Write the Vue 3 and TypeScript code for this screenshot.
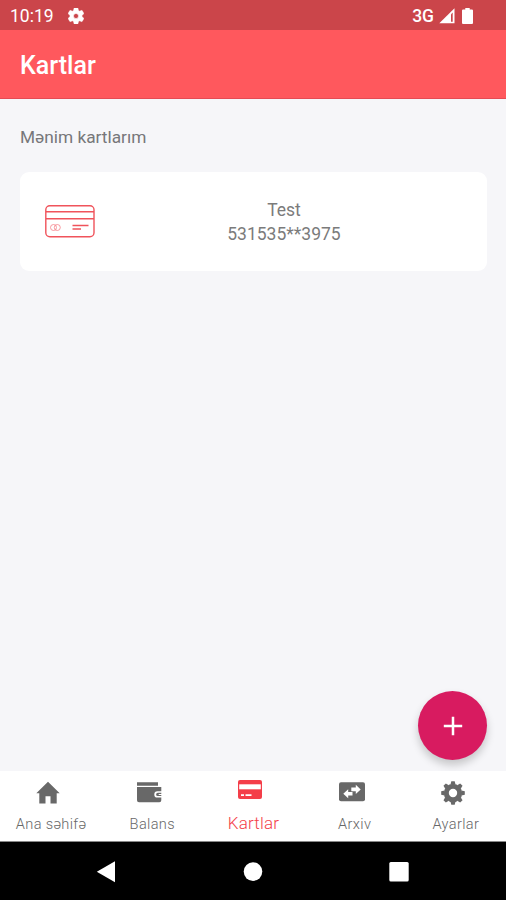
<script setup lang="ts">
import { ref } from 'vue'

interface Tab {
  id: string
  label: string
}

interface BankCard {
  name: string
  number: string
}

const tabs: Tab[] = [
  { id: 'home', label: 'Ana səhifə' },
  { id: 'balance', label: 'Balans' },
  { id: 'cards', label: 'Kartlar' },
  { id: 'archive', label: 'Arxiv' },
  { id: 'settings', label: 'Ayarlar' },
]
const active = ref('cards')
const cards: BankCard[] = [{ name: 'Test', number: '531535**3975' }]
const cogTeeth: number[] = [0, 45, 90, 135, 180, 225, 270, 315]
</script>

<template>
  <div class="screen">
    <div class="status">
      <span class="time">10:19</span>
      <svg class="status-gear" width="16" height="16" viewBox="2 2 20 20">
        <path fill="#fff" stroke="#fff" stroke-width=".8" fill-rule="evenodd" d="M19.43 12.98c.04-.32.07-.64.07-.98s-.03-.66-.07-.98l2.11-1.65c.19-.15.24-.42.12-.64l-2-3.46c-.12-.22-.39-.3-.61-.22l-2.49 1c-.52-.4-1.08-.73-1.69-.98l-.38-2.65C14.46 2.18 14.25 2 14 2h-4c-.25 0-.46.18-.49.42l-.38 2.65c-.61.25-1.17.59-1.69.98l-2.49-1c-.23-.09-.49 0-.61.22l-2 3.46c-.13.22-.07.49.12.64l2.11 1.65c-.04.32-.07.65-.07.98s.03.66.07.98l-2.11 1.65c-.19.15-.24.42-.12.64l2 3.46c.12.22.39.3.61.22l2.49-1c.52.4 1.08.73 1.69.98l.38 2.65c.03.24.24.42.49.42h4c.25 0 .46-.18.49-.42l.38-2.65c.61-.25 1.17-.59 1.69-.98l2.49 1c.23.09.49 0 .61-.22l2-3.46c.12-.22.07-.49-.12-.64zM12 15.2a3.2 3.2 0 1 1 0-6.4 3.2 3.2 0 0 1 0 6.4z" />
      </svg>
      <span class="network">3G</span>
      <svg class="signal" width="16" height="16" viewBox="0 0 16 16">
        <path d="M.3 15.3 15.5.3v15z" fill="#fff" />
        <path d="M12 6.2v7.6h1.7V4.6z" fill="#cb454a" />
      </svg>
      <svg class="battery" width="11" height="16" viewBox="0 0 10 16" preserveAspectRatio="none">
        <path d="M3 0h4v1.5h2a1 1 0 0 1 1 1V15a1 1 0 0 1-1 1H1a1 1 0 0 1-1-1V2.500a1 1 0 0 1 1-1h2z" fill="#fff" />
      </svg>
    </div>

    <header class="app-bar"><h1>Kartlar</h1></header>

    <main class="content">
      <h2>Mənim kartlarım</h2>
      <section v-for="card in cards" :key="card.number" class="card">
        <svg class="card-icon" width="50" height="33" viewBox="0 0 50 33" fill="none" stroke="#f0535b">
          <rect x=".8" y=".8" width="48.2" height="31" rx="4" stroke-width="1.4" />
          <path d="M1 6.700h48M1 13.700h48" stroke-width="1.4" />
          <path d="M27.500 20.500h16M27.500 24h8.500" stroke-width="1.5" />
          <g stroke-width=".8" stroke="#f58289">
            <circle cx="8.500" cy="22.500" r="3" />
            <circle cx="12.300" cy="22.500" r="3" />
          </g>
        </svg>
        <div class="details">
          <span>{{ card.name }}</span>
          <span>{{ card.number }}</span>
        </div>
      </section>
      <button class="fab" aria-label="+">
        <svg width="20" height="20" viewBox="0 0 20 20">
          <path d="M10 .8v18.400M.8 10h18.400" stroke="#fff" stroke-width="2.500" />
        </svg>
      </button>
    </main>

    <nav class="tabs">
      <button
        v-for="tab in tabs"
        :key="tab.id"
        class="tab"
        :class="{ active: active === tab.id }"
        @click="active = tab.id"
      >
        <svg v-if="tab.id === 'home'" class="icon" width="26" height="24" viewBox="0 0 26 24">
          <path d="M13 .8 1.300 12.200h3v10.400h6.200v-7.400h5v7.400h6.200V12.200h3z" fill="currentColor" />
        </svg>
        <svg v-else-if="tab.id === 'balance'" class="icon" width="26" height="24" viewBox="0 0 26 24">
          <path d="M1 1.300h21v3.400H1zM1 6h24.300v4.200h-3.800a3.200 3.200 0 0 0 0 6.400h3.800v2.600a2 2 0 0 1-2 2H3a2 2 0 0 1-2-2z" fill="currentColor" />
          <path d="M25.300 11.700h-3.500a1.700 1.700 0 0 0 0 3.400h3.500v-1.200h-2.600v-1h2.600z" fill="currentColor" />
        </svg>
        <svg v-else-if="tab.id === 'cards'" class="icon" width="26" height="24" viewBox="0 0 26 24">
          <rect x="1" y="2" width="24" height="19" rx="2" fill="currentColor" />
          <path d="M2.200 6.300h21.600v5H2.200z" fill="#fff" />
          <path d="M4 17.200h3M8.500 17.200h6" stroke="#fff" stroke-width="1.700" />
        </svg>
        <svg v-else-if="tab.id === 'archive'" class="icon" width="26" height="24" viewBox="0 0 26 24">
          <rect y="1.300" width="26" height="19" rx="2" fill="currentColor" />
          <path d="M12.300 6.500h4.500V3.800l4.900 4.600-4.900 4.500v-2.700h-4.500zM13.500 10.900H9.200V8.200l-4.900 4.600 4.900 4.500v-2.700h4.300z" fill="#fff" />
        </svg>
        <svg v-else class="icon" width="26" height="24" viewBox="-13 -12 26 24">
          <circle r="6.700" fill="none" stroke="currentColor" stroke-width="5" />
          <path
            v-for="angle in cogTeeth"
            :key="angle"
            :transform="`rotate(${angle})`"
            d="M-2.500-8.400-1.700-11.800h3.400L2.500-8.400z"
            fill="currentColor"
          />
        </svg>
        <span class="label">{{ tab.label }}</span>
      </button>
    </nav>

    <div class="system-nav">
      <svg width="20" height="22" viewBox="0 0 20 22"><path d="M.8 10.800 19 .3v21z" fill="#fff" /></svg>
      <svg class="home-key" width="20" height="20" viewBox="0 0 20 20"><circle cx="10" cy="9.600" r="9.300" fill="#fff" /></svg>
      <svg width="20" height="20" viewBox="0 0 20 20"><rect x=".3" y="0" width="19.400" height="19.400" rx="1.500" fill="#fff" /></svg>
    </div>
  </div>
</template>

<style>
body {
  margin: 0;
}
</style>

<style scoped>
.screen {
  width: 506px;
  height: 900px;
  display: flex;
  flex-direction: column;
  overflow: hidden;
  background: #f6f6f9;
  font-family: Roboto, 'Noto Sans', sans-serif;
}
.status {
  box-sizing: border-box;
  height: 30px;
  flex: none;
  display: flex;
  align-items: center;
  padding: 1px 33px 0 10px;
  background: #cb454a;
  color: #fff;
  font-size: 17.5px;
}
.time {
  width: 58px;
}
.network {
  margin-left: auto;
  font-weight: 500;
}
.signal {
  margin-left: 5px;
}
.battery {
  margin-left: 7px;
}
.app-bar {
  box-sizing: border-box;
  height: 69px;
  flex: none;
  display: flex;
  align-items: center;
  padding: 4px 20px 0;
  background: #ff585d;
  border-bottom: 1px solid #e54b54;
}
h1 {
  margin: 0;
  color: #fff;
  font-size: 25px;
  font-weight: 500;
  line-height: 30px;
}
.content {
  flex: 1;
  display: flex;
  flex-direction: column;
  padding: 27px 19px 11px 20px;
}
h2 {
  margin: 0 0 24px;
  color: #77777a;
  font-size: 17.3px;
  font-weight: 400;
  line-height: 22px;
}
.card {
  height: 99px;
  display: flex;
  align-items: center;
  border-radius: 9px;
  background: #fff;
}
.card-icon {
  flex: none;
  margin-left: 25px;
}
.details {
  width: 378px;
  display: flex;
  flex-direction: column;
  align-items: center;
  color: #7b7b7b;
  font-size: 17.5px;
  line-height: 24px;
}
.fab {
  width: 69px;
  height: 69px;
  display: flex;
  align-items: center;
  justify-content: center;
  margin: auto 0 0 auto;
  padding: 0;
  border: 0;
  border-radius: 50%;
  background: #d81b60;
  box-shadow: 0 5px 9px rgba(0, 0, 0, 0.2);
}
.tabs {
  box-sizing: border-box;
  height: 70px;
  flex: none;
  display: grid;
  grid-template-columns: repeat(5, 1fr);
  background: #fff;
}
.content {
  min-height: 0;
}
.tab {
  display: flex;
  flex-direction: column;
  align-items: center;
  padding: 10px 0 0;
  border: 0;
  background: none;
  color: #686868;
  font-family: inherit;
}
.icon {
  margin-right: 5px;
}
.label {
  margin-top: 8px;
  margin-left: 1px;
  color: #686868;
  font-size: 14.6px;
  font-weight: 300;
  line-height: 22px;
  letter-spacing: 0.35px;
  white-space: nowrap;
}
.tab.active {
  padding-top: 7px;
  color: #f43e49;
}
.active .label {
  margin-top: 10px;
  color: #f43e49;
  font-size: 17px;
  letter-spacing: 0.2px;
}
.system-nav {
  box-sizing: border-box;
  height: 59px;
  flex: none;
  display: flex;
  align-items: center;
  justify-content: space-between;
  padding: 1px 97px 0 96px;
  border-top: 1px solid #888;
  background: #000;
}
</style>
